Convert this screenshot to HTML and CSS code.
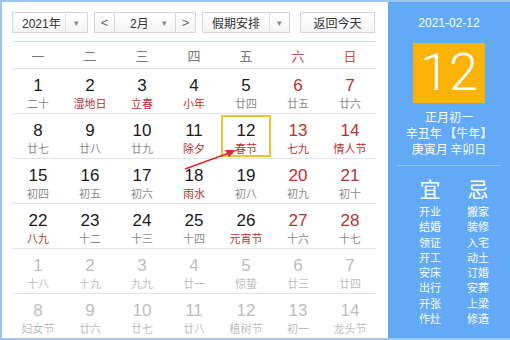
FILE: index.html
```html
<!DOCTYPE html>
<html lang="zh-CN">
<head>
  <meta charset="UTF-8" />
  <title>万年历</title>
  <link rel="stylesheet" href="styles.css">
</head>
<body>
  <div class="cal">
    <div class="main">
      <div class="toolbar">
        <div class="sel year"><span class="val">2021年</span><span class="drop">&#9662;</span></div>
        <div class="month">
          <span class="nav">&lt;</span>
          <div class="sel mon"><span class="val">2月</span><span class="drop plain">&#9662;</span></div>
          <span class="nav">&gt;</span>
        </div>
        <div class="sel hol"><span class="val">假期安排</span><span class="drop">&#9662;</span></div>
        <button class="today-btn">返回今天</button>
      </div>

      <div class="weekdays">
        <span>一</span><span>二</span><span>三</span><span>四</span><span>五</span>
        <span class="wk">六</span><span class="wk">日</span>
      </div>

      <div class="days" id="days"></div>

      <svg class="pointer" width="60" height="30" viewBox="0 0 60 30">
        <line x1="2" y1="26" x2="46" y2="10" stroke="#e02a2a" stroke-width="1.6" />
        <polygon points="53,7 42,7 46,14" fill="#e02a2a" />
      </svg>
    </div>

    <div class="side">
      <div class="side-date">2021-02-12</div>
      <div class="big-day">12</div>
      <div class="lunar-info">
        <div>正月初一</div>
        <div>辛丑年 【牛年】</div>
        <div>庚寅月 辛卯日</div>
      </div>
      <div class="yiji">
        <div class="col">
          <div class="head">宜</div>
          <div>开业</div><div>结婚</div><div>领证</div><div>开工</div>
          <div>安床</div><div>出行</div><div>开张</div><div>作灶</div>
        </div>
        <div class="col">
          <div class="head">忌</div>
          <div>搬家</div><div>装修</div><div>入宅</div><div>动土</div>
          <div>订婚</div><div>安葬</div><div>上梁</div><div>修造</div>
        </div>
      </div>
    </div>
  </div>

  <script>
    // [day, lunar, flags]  r = red number, l = red lunar, o = other month, t = today
    const days = [
      [1,"二十",""],[2,"湿地日","l"],[3,"立春","l"],[4,"小年","l"],[5,"廿四",""],[6,"廿五","r"],[7,"廿六","r"],
      [8,"廿七",""],[9,"廿八",""],[10,"廿九",""],[11,"除夕","l"],[12,"春节","lt"],[13,"七九","rl"],[14,"情人节","rl"],
      [15,"初四",""],[16,"初五",""],[17,"初六",""],[18,"雨水","l"],[19,"初八",""],[20,"初九","r"],[21,"初十","r"],
      [22,"八九","l"],[23,"十二",""],[24,"十三",""],[25,"十四",""],[26,"元宵节","l"],[27,"十六","r"],[28,"十七","r"],
      [1,"十八","o"],[2,"十九","o"],[3,"九九","o"],[4,"廿一","o"],[5,"惊蛰","o"],[6,"廿三","o"],[7,"廿四","o"],
      [8,"妇女节","o"],[9,"廿六","o"],[10,"廿七","o"],[11,"廿八","o"],[12,"植树节","o"],[13,"初一","o"],[14,"龙头节","o"]
    ];

    const daysDiv = document.getElementById("days");
    days.forEach(([d, lunar, f]) => {
      const cell = document.createElement("div");
      cell.className = "day";
      if (f.includes("r")) cell.classList.add("red");
      if (f.includes("l")) cell.classList.add("red-lunar");
      if (f.includes("o")) cell.classList.add("other");
      if (f.includes("t")) cell.classList.add("today");
      cell.innerHTML = `<div class="in"><div class="num">${d}</div><div class="lunar">${lunar}</div></div>`;
      daysDiv.appendChild(cell);
    });
  </script>
</body>
</html>
```

FILE: styles.css
```css
* {
  margin: 0;
  padding: 0;
  box-sizing: border-box;
}
body {
  width: 510px;
  height: 340px;
  overflow: hidden;
  background: #fff;
  font-family: "Liberation Sans", "Noto Sans CJK SC", sans-serif;
  color: #222;
}
.cal {
  display: flex;
  width: 510px;
  height: 340px;
  border: 2px solid #9cc6ee;
  border-right: none;
  overflow: hidden;
}
.main {
  position: relative;
  width: 386px;
  padding: 10px 0 0 10px;
}

/* toolbar */
.toolbar {
  display: flex;
  height: 21px;
  font-size: 12px;
  color: #333;
}
.sel, .nav, .today-btn {
  display: flex;
  align-items: center;
  height: 21px;
  border: 1px solid #d6d6d6;
  background: linear-gradient(#fff, #f4f4f4);
}
.sel .val {
  flex: 1;
  padding-left: 9px;
}
.sel .drop {
  width: 22px;
  height: 100%;
  display: flex;
  align-items: center;
  justify-content: center;
  border-left: 1px solid #e2e2e2;
  font-size: 9px;
  color: #888;
}
.sel .drop.plain {
  border-left: none;
}
.year {
  width: 76px;
}
.month {
  display: flex;
  margin-left: 6px;
}
.nav {
  width: 21px;
  justify-content: center;
  color: #666;
  font-size: 13px;
}
.mon {
  width: 60px;
  border-left: none;
  border-right: none;
}
.mon .val {
  padding-left: 15px;
}
.hol {
  width: 88px;
  margin-left: 6px;
}
.hol .drop {
  width: 20px;
}
.today-btn {
  width: 75px;
  margin-left: 10px;
  justify-content: center;
  font: inherit;
  color: #333;
}

/* week header */
.weekdays {
  display: grid;
  grid-template-columns: repeat(7, 52px);
  height: 28px;
  margin-top: 8px;
  border-top: 1px solid #c9d9e6;
  border-bottom: 1px solid #e0e0e0;
  width: 364px;
  align-items: center;
  text-align: center;
  font-size: 13px;
  font-family: "Noto Sans CJK SC", sans-serif;
  color: #777;
}
.weekdays .wk {
  color: #c0504d;
}

/* days grid */
.days {
  display: grid;
  grid-template-columns: repeat(7, 52px);
  grid-auto-rows: 45px;
  width: 364px;
}
.day {
  border-bottom: 1px solid #e4e4e4;
  text-align: center;
  padding: 1px;
}
.day .in {
  height: 42px;
  padding-top: 5px;
  border: 2px solid transparent;
}
.day.today .in {
  border-color: #f0c330;
}
.num {
  font-size: 17px;
  line-height: 18px;
  color: #1a1a1a;
}
.lunar {
  font-size: 11px;
  line-height: 14px;
  margin-top: 1px;
  color: #8a8a8a;
  font-family: "Noto Sans CJK SC", sans-serif;
}
.day.red .num {
  color: #b83232;
}
.day.red-lunar .lunar {
  color: #b83232;
}
.day.other .num,
.day.other .lunar {
  color: #bdbdbd;
}

.pointer {
  position: absolute;
  left: 181px;
  top: 141px;
}

/* side panel */
.side {
  width: 122px;
  background: #62aaf6;
  color: #fff;
  display: flex;
  flex-direction: column;
  align-items: center;
  font-family: "Noto Sans CJK SC", sans-serif;
}
.side-date {
  margin-top: 13px;
  font-size: 12px;
  line-height: 16px;
  font-family: "Liberation Sans", sans-serif;
}
.big-day {
  width: 72px;
  height: 60px;
  margin-top: 12px;
  background: #fbb308;
  font-family: Roboto, "Liberation Sans", sans-serif;
  font-weight: 300;
  font-size: 52px;
  line-height: 60px;
  text-align: center;
}
.lunar-info {
  margin-top: 6px;
  width: 104px;
  padding-bottom: 8px;
  border-bottom: 1px solid #8cc2f8;
  text-align: center;
  font-size: 12px;
  line-height: 16px;
}
.yiji {
  display: flex;
  gap: 20px;
  margin-top: 8px;
  margin-left: 10px;
}
.yiji .col {
  width: 28px;
  text-align: center;
  font-size: 11px;
  line-height: 15.3px;
}
.yiji .head {
  font-size: 21px;
  line-height: 28px;
  margin-bottom: 2px;
}
```
